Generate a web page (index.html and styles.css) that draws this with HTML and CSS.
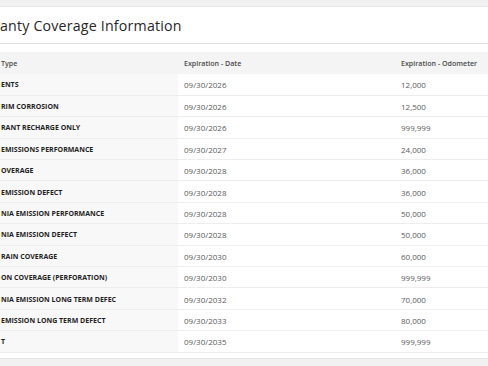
FILE: index.html
```html
<!DOCTYPE html>
<html lang="en">
<head>
<meta charset="utf-8">
<link rel="stylesheet" href="styles.css">
<title>Warranty Coverage Information</title>
</head>
<body>
<div class="page">
  <section class="card">
    <h2 class="card-title">anty Coverage Information</h2>
    <div class="table-wrap">
      <table class="coverage">
        <colgroup>
          <col class="c-type">
          <col class="c-date">
          <col class="c-odo">
        </colgroup>
        <thead>
          <tr><th>Type</th><th>Expiration - Date</th><th>Expiration - Odometer</th></tr>
        </thead>
        <tbody>
          <tr><td>ENTS</td><td>09/30/2026</td><td>12,000</td></tr>
          <tr><td>RIM CORROSION</td><td>09/30/2026</td><td>12,500</td></tr>
          <tr><td>RANT RECHARGE ONLY</td><td>09/30/2026</td><td>999,999</td></tr>
          <tr><td>EMISSIONS PERFORMANCE</td><td>09/30/2027</td><td>24,000</td></tr>
          <tr><td>OVERAGE</td><td>09/30/2028</td><td>36,000</td></tr>
          <tr><td>EMISSION DEFECT</td><td>09/30/2028</td><td>36,000</td></tr>
          <tr><td>NIA EMISSION PERFORMANCE</td><td>09/30/2028</td><td>50,000</td></tr>
          <tr><td>NIA EMISSION DEFECT</td><td>09/30/2028</td><td>50,000</td></tr>
          <tr><td>RAIN COVERAGE</td><td>09/30/2030</td><td>60,000</td></tr>
          <tr><td>ON COVERAGE (PERFORATION)</td><td>09/30/2030</td><td>999,999</td></tr>
          <tr><td>NIA EMISSION LONG TERM DEFEC</td><td>09/30/2032</td><td>70,000</td></tr>
          <tr><td>EMISSION LONG TERM DEFECT</td><td>09/30/2033</td><td>80,000</td></tr>
          <tr><td>T</td><td>09/30/2035</td><td>999,999</td></tr>
        </tbody>
      </table>
    </div>
  </section>
</div>
</body>
</html>
```
FILE: styles.css
```css
html, body {
  margin: 0;
  padding: 0;
}
body {
  background: #f1f1f1;
  font-family: "Open Sans", "Liberation Sans", sans-serif;
  overflow: hidden;
  width: 488px;
  height: 366px;
}
.page {
  padding-top: 6px;
}
.card {
  background: #ffffff;
  border-top: 1px solid #e6e6e6;
  border-bottom: 1px solid #e6e6e6;
  margin-right: -20px;
  padding-bottom: 5px;
}
.card-title {
  margin: 0;
  height: 37px;
  display: flex;
  align-items: center;
  font-size: 14.2px;
  font-weight: 400;
  color: #262626;
  letter-spacing: 0.2px;
  border-bottom: 1px solid #e2e2e2;
  padding-top: 1px;
  box-sizing: border-box;
}
.table-wrap {
  padding-top: 8px;
}
.coverage {
  border-collapse: collapse;
  table-layout: fixed;
  width: 520px;
}
.c-type { width: 178px; }
.c-date { width: 217px; }
.c-odo { width: 125px; }
.coverage th,
.coverage td {
  text-align: left;
  padding: 0 0 0 6px;
  border-bottom: 1px solid #ededed;
  white-space: nowrap;
  overflow: hidden;
}
.coverage th:first-child,
.coverage td:first-child {
  padding-left: 1px;
}
.coverage thead tr {
  height: 22px;
  background: #f4f4f4;
}
.coverage th {
  font-size: 7.1px;
  font-weight: 600;
  color: #4a4a4a;
  border-bottom: none;
}
.coverage tbody tr {
  height: 21.4px;
}
.coverage td {
  font-size: 8px;
  color: #5a5a5a;
  padding-top: 1px;
}
.coverage td:first-child {
  font-size: 7px;
  background: #f8f8f8;
  font-weight: 700;
  color: #1e1e1e;
}
```
